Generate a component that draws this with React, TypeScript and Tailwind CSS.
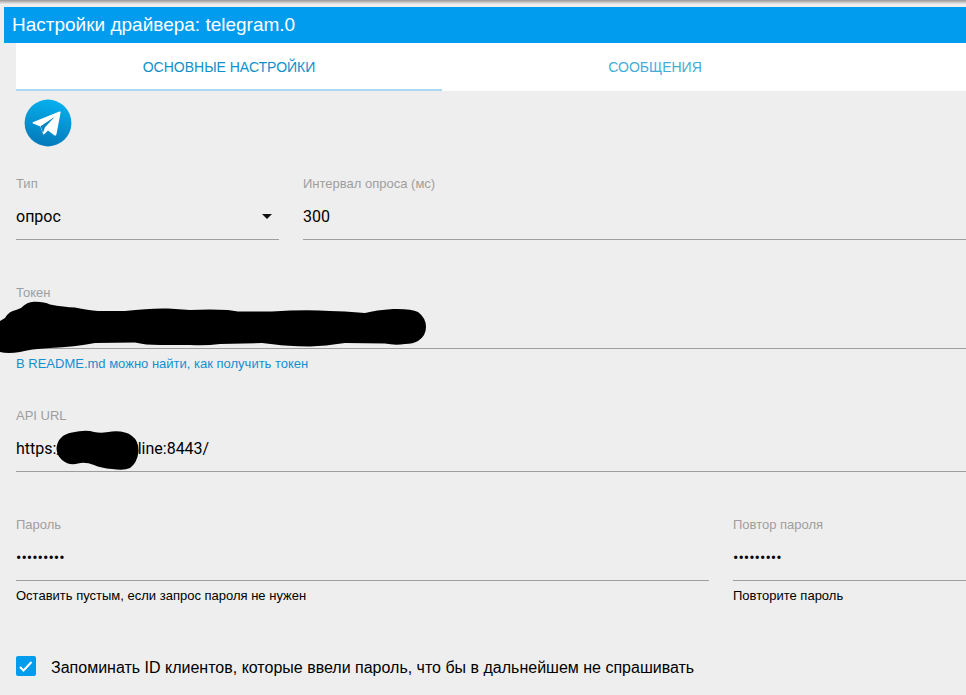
import React, { useState } from "react";
import { clsx } from "clsx";

const tabs = [
  { id: "main", title: "ОСНОВНЫЕ НАСТРОЙКИ" },
  { id: "messages", title: "СООБЩЕНИЯ" },
];

const inputClass =
  "block h-[46px] w-full border-b border-[#9e9e9e] bg-transparent font-[Roboto,'Liberation_Sans',sans-serif] text-base text-black outline-none";

type FieldProps = {
  id: string;
  label: string;
  helper?: React.ReactNode;
  children: React.ReactNode;
};

const Field: React.FC<FieldProps> = ({ id, label, helper, children }) => (
  <div className="relative min-w-0">
    <label htmlFor={id} className="block text-[13px] leading-5 text-[#9e9e9e]">
      {label}
    </label>
    {children}
    {helper && <div className="mt-[5px] text-[13px] leading-5">{helper}</div>}
  </div>
);

const TelegramLogo = () => (
  <svg viewBox="0 0 240 240" className="size-12" aria-hidden="true">
    <defs>
      <linearGradient id="tg" x1="0.6" y1="0" x2="0.4" y2="1">
        <stop offset="0" stopColor="#06b0ee" />
        <stop offset="1" stopColor="#0479b9" />
      </linearGradient>
    </defs>
    <circle cx="120" cy="120" r="117" fill="url(#tg)" />
    <path
      fill="#fff"
      d="M44 116 L177 63 Q184 61 183 68 L162 178 Q159 187 151 181 L120 158 L101 176 Q96 179 94 173 L82 137 L45 122 Q40 119 44 116 Z"
    />
    <path fill="#0784c3" d="M83 136 L154 89 L104 143 L95 170 Z" />
  </svg>
);

const TokenMask = () => (
  <svg viewBox="0 300 428 54" className="pointer-events-none absolute -left-4 top-[17px] h-[54px] w-[428px]" aria-hidden="true">
    <path d="M0 321 L5 318 Q9 311 16 310 L21 308 Q28 301 35 301.700 Q44 301.500 50 304.500 Q64 307 75 307.500 Q88 310 98 311 L125 311 Q150 308 168 308.500 L190 310 Q210 309 228 310 L238 311.500 L272 311.500 Q305 309.500 330 311 L345 311.500 L365 313 Q376 310 393 309 Q411 308.500 418 312 Q426 318 426 327 Q426 336 418 341 Q413 344 405 344 Q395 345.500 385 343.500 L345 343 Q325 346 310 346.500 Q285 346 275 344.500 L262 343 L220 344 Q205 346 190 345 L160 345 Q145 345 135 342.500 L95 343 Q75 347 50 348 Q30 349 20 352 Q8 354 0 352 Z" />
  </svg>
);

const UrlMask = () => (
  <svg viewBox="56 430 84 42" className="pointer-events-none absolute left-10 top-6 h-[42px] w-[84px]" aria-hidden="true">
    <path d="M56.500 448 Q58 435 72 432.500 Q86 429.500 94 432 Q102 433.500 112 431.500 Q125 430.500 132 436 Q139 441 138.500 452 Q137 463 130 468 Q124 471 112 469 Q101 468 94 465 Q85 461.500 78 463.500 Q69 466 62 460 Q56.500 455 56.500 448 Z" />
  </svg>
);

export default function App() {
  const [activeTab, setActiveTab] = useState("main");
  const [type, setType] = useState("polling");
  const [interval, setInterval] = useState("300");
  const [token, setToken] = useState("");
  const [url, setUrl] = useState("https://xxxxxx.online:8443/");
  const [password, setPassword] = useState("123456789");
  const [repeat, setRepeat] = useState("123456789");
  const [remember, setRemember] = useState(true);

  return (
    <div className="min-h-screen overflow-x-hidden bg-[#eee] font-['Liberation_Sans',Arial,sans-serif] text-black">
      <div className="h-[7px] bg-linear-to-b from-[#9a9698] to-[#eee] to-60%" />
      <header className="ml-1 flex h-9 items-center bg-[#029cef] px-2">
        <h1 className="text-[19px] leading-6 text-white">Настройки драйвера: telegram.0</h1>
      </header>

      <main className="pl-4">
        <nav className="grid h-12 grid-cols-[426fr_426fr_98fr] bg-white" role="tablist">
          {tabs.map((tab) => (
            <button
              key={tab.id}
              type="button"
              role="tab"
              aria-selected={activeTab === tab.id}
              onClick={() => setActiveTab(tab.id)}
              className={clsx(
                "border-b-2 pt-0.5 text-sm",
                activeTab === tab.id ? "border-[#a8d8f2] text-[#0f8fcb]" : "border-transparent text-[#45acd8]"
              )}
            >
              {tab.title}
            </button>
          ))}
        </nav>

        <div className="p-2">
          <TelegramLogo />
        </div>

        <div className="mt-[19px] grid grid-cols-[263fr_663fr] gap-6">
          <Field id="type" label="Тип">
            <select
              id="type"
              value={type}
              onChange={(e) => setType(e.target.value)}
              className={clsx(inputClass, "appearance-none")}
            >
              <option value="polling">опрос</option>
            </select>
            <svg viewBox="0 0 10 5" className="pointer-events-none absolute right-[7px] top-10 h-[5px] w-2.5" aria-hidden="true">
              <path d="M0 0h10L5 5z" fill="#111" />
            </svg>
          </Field>
          <Field id="interval" label="Интервал опроса (мс)">
            <input id="interval" value={interval} onChange={(e) => setInterval(e.target.value)} className={inputClass} />
          </Field>
        </div>

        <div className="mt-[43px]">
          <Field
            id="token"
            label="Токен"
            helper={
              <a href="#readme" className="text-[#1390d0]">
                В README.md можно найти, как получить токен
              </a>
            }
          >
            <input id="token" value={token} onChange={(e) => setToken(e.target.value)} className={inputClass} />
            <TokenMask />
          </Field>
        </div>

        <div className="mt-8">
          <Field id="url" label="API URL">
            <input id="url" value={url} onChange={(e) => setUrl(e.target.value)} className={inputClass} />
            <UrlMask />
          </Field>
        </div>

        <div className="mt-[43px] grid grid-cols-[693fr_233fr] gap-6">
          <Field id="password" label="Пароль" helper="Оставить пустым, если запрос пароля не нужен">
            <input
              id="password"
              type="password"
              value={password}
              onChange={(e) => setPassword(e.target.value)}
              className={inputClass}
            />
          </Field>
          <Field id="repeat" label="Повтор пароля" helper="Повторите пароль">
            <input
              id="repeat"
              type="password"
              value={repeat}
              onChange={(e) => setRepeat(e.target.value)}
              className={inputClass}
            />
          </Field>
        </div>

        <div className="mt-12 flex items-center pb-4">
          <span className="relative size-5 shrink-0">
            <input
              id="remember"
              type="checkbox"
              checked={remember}
              onChange={(e) => setRemember(e.target.checked)}
              className="block size-5 appearance-none rounded-xs border-2 border-[#5a5a5a] checked:border-[#029cef] checked:bg-[#029cef]"
            />
            {remember && (
              <svg viewBox="0 0 20 20" className="pointer-events-none absolute inset-0 size-5" aria-hidden="true">
                <path d="M4 11 L7.500 14.500 L15.500 6" fill="none" stroke="#fff" strokeWidth="2" />
              </svg>
            )}
          </span>
          <label htmlFor="remember" className="pl-[15px] pt-1 text-base leading-5">
            Запоминать ID клиентов, которые ввели пароль, что бы в дальнейшем не спрашивать
          </label>
        </div>
      </main>
    </div>
  );
}
